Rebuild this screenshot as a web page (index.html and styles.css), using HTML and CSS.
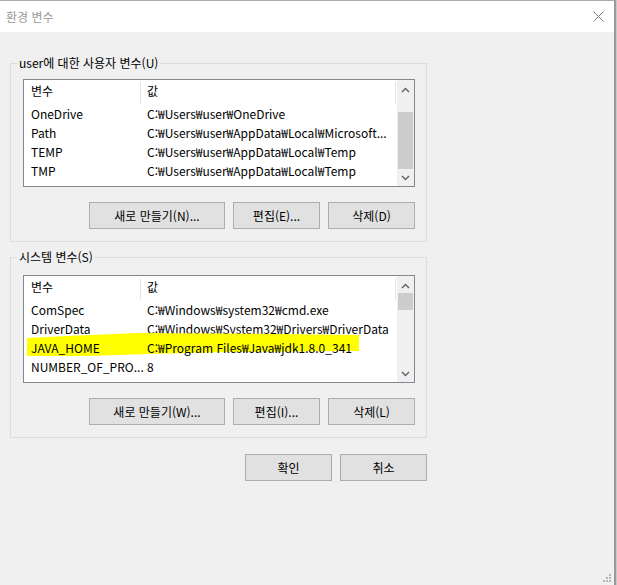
FILE: index.html
```html
<!DOCTYPE html>
<html lang="ko">
<head>
    <meta charset="utf-8">
    <title>환경 변수</title>
    <link rel="stylesheet" href="styles.css">
</head>
<body>
    <div class="window">
        <div class="titlebar">
            <span class="title">환경 변수</span>
            <svg class="close" width="11" height="11" viewBox="0 0 11 11">
                <path d="M0.5 0.5 L10.5 10.5 M10.5 0.5 L0.5 10.5" stroke="#7a7a7a" stroke-width="1" fill="none" />
            </svg>
        </div>

        <div class="content">
            <fieldset class="group">
                <legend>user에 대한 사용자 변수(U)</legend>
                <div class="list">
                    <div class="list-body">
                        <div class="list-head">
                            <span class="col-name">변수</span>
                            <span class="col-value">값</span>
                        </div>
                        <div class="row"><span class="col-name">OneDrive</span><span class="col-value">C:₩Users₩user₩OneDrive</span></div>
                        <div class="row"><span class="col-name">Path</span><span class="col-value">C:₩Users₩user₩AppData₩Local₩Microsoft...</span></div>
                        <div class="row"><span class="col-name">TEMP</span><span class="col-value">C:₩Users₩user₩AppData₩Local₩Temp</span></div>
                        <div class="row"><span class="col-name">TMP</span><span class="col-value">C:₩Users₩user₩AppData₩Local₩Temp</span></div>
                    </div>
                    <div class="scrollbar">
                        <div class="sb-btn sb-up">
                            <svg width="9" height="6" viewBox="0 0 9 6"><polyline points="1,5 4.5,1.5 8,5" stroke="#606060" stroke-width="1.4" fill="none" /></svg>
                        </div>
                        <div class="sb-track"><div class="sb-thumb thumb-user"></div></div>
                        <div class="sb-btn">
                            <svg width="9" height="6" viewBox="0 0 9 6"><polyline points="1,1 4.5,4.5 8,1" stroke="#606060" stroke-width="1.4" fill="none" /></svg>
                        </div>
                    </div>
                </div>
                <div class="buttons">
                    <button class="btn btn-wide">새로 만들기(N)...</button>
                    <button class="btn">편집(E)...</button>
                    <button class="btn">삭제(D)</button>
                </div>
            </fieldset>

            <fieldset class="group group-system">
                <legend>시스템 변수(S)</legend>
                <div class="list">
                    <div class="list-body">
                        <div class="list-head">
                            <span class="col-name">변수</span>
                            <span class="col-value">값</span>
                        </div>
                        <div class="row"><span class="col-name">ComSpec</span><span class="col-value">C:₩Windows₩system32₩cmd.exe</span></div>
                        <div class="row"><span class="col-name">DriverData</span><span class="col-value">C:₩Windows₩System32₩Drivers₩DriverData</span></div>
                        <div class="row row-mark"><span class="col-name">JAVA_HOME</span><span class="col-value">C:₩Program Files₩Java₩jdk1.8.0_341</span></div>
                        <div class="row"><span class="col-name">NUMBER_OF_PRO...</span><span class="col-value">8</span></div>
                    </div>
                    <div class="scrollbar">
                        <div class="sb-btn sb-up">
                            <svg width="9" height="6" viewBox="0 0 9 6"><polyline points="1,5 4.5,1.5 8,5" stroke="#606060" stroke-width="1.4" fill="none" /></svg>
                        </div>
                        <div class="sb-track"><div class="sb-thumb thumb-sys"></div></div>
                        <div class="sb-btn">
                            <svg width="9" height="6" viewBox="0 0 9 6"><polyline points="1,1 4.5,4.5 8,1" stroke="#606060" stroke-width="1.4" fill="none" /></svg>
                        </div>
                    </div>
                </div>
                <div class="buttons">
                    <button class="btn btn-wide">새로 만들기(W)...</button>
                    <button class="btn">편집(I)...</button>
                    <button class="btn">삭제(L)</button>
                </div>
            </fieldset>

            <div class="dialog-buttons">
                <button class="btn">확인</button>
                <button class="btn">취소</button>
            </div>
        </div>

        <svg class="grip" width="9" height="9" viewBox="0 0 9 9">
            <rect x="6" y="0" width="2" height="2" fill="#b8b8b8" />
            <rect x="3" y="3" width="2" height="2" fill="#b8b8b8" />
            <rect x="6" y="3" width="2" height="2" fill="#b8b8b8" />
            <rect x="0" y="6" width="2" height="2" fill="#b8b8b8" />
            <rect x="3" y="6" width="2" height="2" fill="#b8b8b8" />
            <rect x="6" y="6" width="2" height="2" fill="#b8b8b8" />
        </svg>
    </div>
</body>
</html>
```

FILE: styles.css
```css
* {
    box-sizing: border-box;
}

html,
body {
    margin: 0;
    height: 100%;
}

body {
    background: #c9c9c9;
    font-family: "Noto Sans CJK KR", "Noto Sans", sans-serif;
    font-size: 12px;
    color: #000;
    overflow: hidden;
}

.window {
    position: relative;
    width: 616px;
    height: 585px;
    background: #f0f0f0;
    border-top: 1px solid #a9a9a9;
    border-right: 2px solid #9a9a9a;
}

.titlebar {
    height: 31px;
    background: #fff;
    display: flex;
    align-items: center;
    justify-content: space-between;
    padding: 0 10px 0 6px;
}

.title {
    color: #999;
    line-height: 16px;
}

.content {
    padding: 23px 0 0 10px;
}

/* group boxes */
.group {
    margin: 0;
    width: 417px;
    min-width: 0;
    border: 1px solid #dcdcdc;
    padding: 8px 11px 12px 12px;
}

.group legend {
    padding: 0 2px;
    margin-left: -6px;
    line-height: 16px;
}

.group-system {
    margin-top: 7px;
    padding-top: 10px;
}

/* list view */
.list {
    display: flex;
    height: 108px;
    border: 1px solid #828790;
    background: #fff;
}

.list-body {
    flex: 1;
    overflow: hidden;
}

.list-head {
    display: flex;
    height: 24px;
}

.list-head span {
    height: 22px;
    margin-top: 2px;
    line-height: 18px;
    border-right: 1px solid #e5e5e5;
}

.row {
    display: flex;
    height: 19px;
    line-height: 19px;
}

.col-name {
    flex: none;
    width: 117px;
    padding-left: 7px;
    white-space: nowrap;
}

.col-value {
    flex: none;
    width: 255px;
    padding-left: 6px;
    white-space: nowrap;
}

.row-mark {
    position: relative;
    z-index: 0;
}

.row-mark::before {
    content: "";
    position: absolute;
    left: 3px;
    top: -5px;
    width: 332px;
    height: 24px;
    background: #ffff00;
    z-index: -1;
    clip-path: polygon(0 5px, 40px 3px, 110px 0, 250px 1px, 332px 2px, 332px 18px, 200px 19px, 120px 21px, 60px 23px, 0 23px);
}

/* scrollbar */
.scrollbar {
    width: 17px;
    display: flex;
    flex-direction: column;
    background: #f0f0f0;
}

.sb-btn {
    height: 17px;
    display: flex;
    align-items: center;
    justify-content: center;
}

.sb-up {
    padding-top: 2px;
}

.sb-track {
    flex: 1;
    display: flex;
    flex-direction: column;
}

.sb-thumb {
    background: #cdcdcd;
    margin: 0 1px;
}

.thumb-user {
    margin-top: 15px;
    flex: 1;
}

.thumb-sys {
    height: 17px;
}

/* buttons */
.buttons,
.dialog-buttons {
    display: flex;
    justify-content: flex-end;
    gap: 8px;
}

.buttons {
    margin-top: 15px;
}

.dialog-buttons {
    width: 417px;
    margin-top: 16px;
}

.btn {
    width: 87px;
    height: 27px;
    padding: 0;
    background: #e1e1e1;
    border: 1px solid #adadad;
    border-radius: 0;
    font: inherit;
    line-height: 16px;
    color: #000;
}

.btn-wide {
    width: 136px;
}

.grip {
    position: absolute;
    right: 2px;
    bottom: 2px;
}
```
